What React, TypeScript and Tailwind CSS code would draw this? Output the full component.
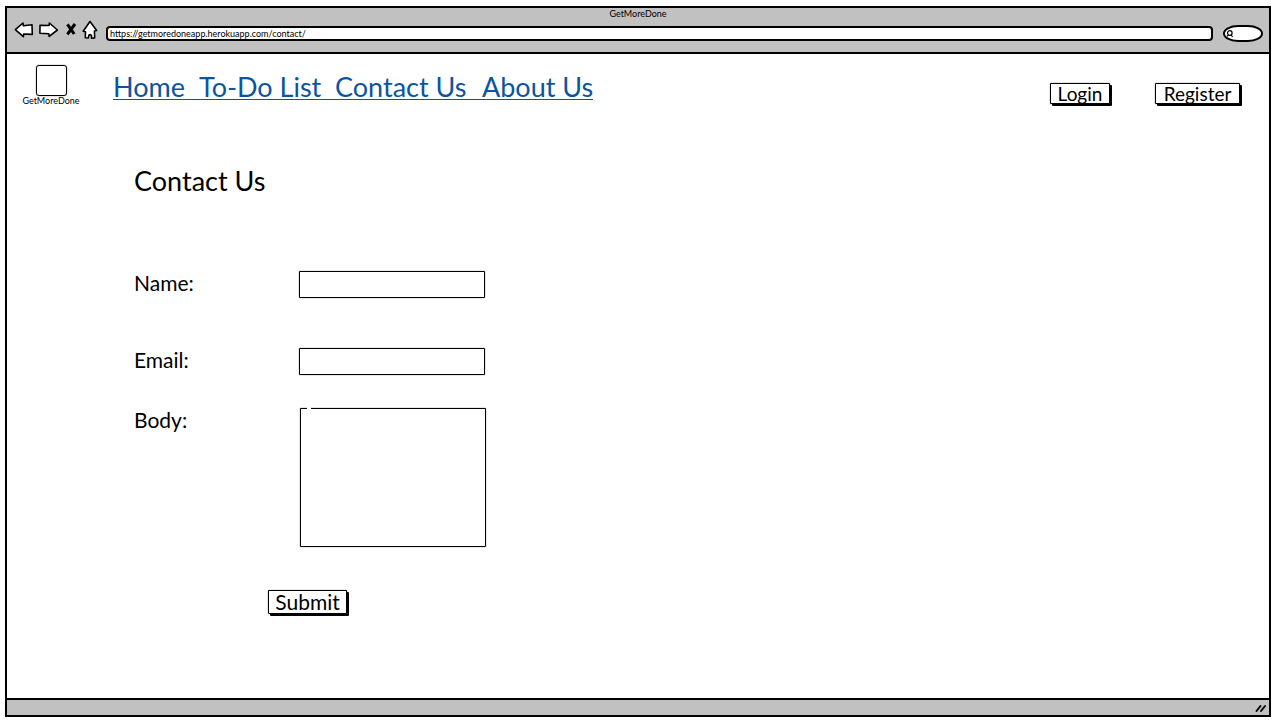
import type { ReactNode } from "react";

const links = [
  { label: "Home", href: "#home", width: "w-[86px]" },
  { label: "To-Do List", href: "#todo", width: "w-[136px]" },
  { label: "Contact Us", href: "#contact", width: "w-[147px]" },
  { label: "About Us", href: "#about", width: "" },
];

const field =
  "block w-full rounded-[1px] border border-black bg-white px-2 text-base leading-[24px] shadow-[0_0_1px_#000] outline-none";

function SketchButton({ children, type = "button", className }: { children: ReactNode; type?: "button" | "submit"; className: string }) {
  return (
    <button
      type={type}
      className={`flex items-center justify-center rounded-[1px] border border-black bg-white shadow-[0_0_1px_#000,2px_2px_0_#000] ${className}`}
    >
      {children}
    </button>
  );
}

function BrowserBar() {
  return (
    <header className="flex h-[46px] flex-col border-b-2 border-black bg-[#c1c1c1]">
      <div className="h-[14px] text-center text-[9px] leading-[12px]">GetMoreDone</div>
      <div className="flex items-center pr-[6px] pl-[7px]">
        <svg viewBox="0 3 86 22" className="h-[22px] w-[86px] shrink-0 overflow-visible fill-white stroke-black" strokeWidth="1.6" strokeLinejoin="round" aria-hidden="true">
          <path d="M1.3 10.7 9 4l.4 2.8 8.6-1 .3 9.6-8.6-.4-.3 2.7Z" />
          <path d="M26 6.2 35 6.5 35.4 4l8 7-8.2 6.4-.4-2.7-8.9-.4Z" />
          <path d="M53.4 5.4 60.2 15M61 5 53.4 15.3" strokeWidth="3" />
          <path d="M76 2.5 82.7 11.5 80.4 12.1 80.7 18.9 77.6 19.3 77.4 16.2 76 15.6 74.8 16.2 74.4 19 71.3 18.8 71.5 12.7 69.2 12.2Z" />
        </svg>
        <input
          type="text"
          aria-label="Address"
          defaultValue="https://getmoredoneapp.herokuapp.com/contact/"
          className="ml-[7px] h-[13px] min-w-0 flex-1 rounded-[3px] border border-black bg-white px-[2px] text-[9px] leading-[11px] shadow-[0_0_0_1px_#000] outline-none"
        />
        <div className="relative ml-[11px] h-[17px] w-[40px] shrink-0">
          <input
            type="text"
            aria-label="Search"
            className="block h-full w-full rounded-[16px/9px] border-2 border-black bg-white pr-1 pl-3 text-[9px] leading-[12px] outline-none"
          />
          <svg viewBox="0 0 8 8" className="absolute top-[5px] left-[3px] h-[8px] w-[8px] fill-none stroke-black" strokeWidth="1.2" aria-hidden="true">
            <circle cx="3.8" cy="3" r="2.3" />
            <path d="M2.4 4.8 1 6.4M5.2 5 6.6 7" />
          </svg>
        </div>
      </div>
    </header>
  );
}

export default function App() {
  return (
    <div className="flex min-h-screen flex-col bg-white px-[5px] pt-[6px] pb-[3px] font-['Lato','Noto_Sans',sans-serif] text-black">
      <div className="flex flex-1 flex-col border-2 border-black">
        <BrowserBar />

        <div className="flex h-[56px] justify-between pr-[29px]">
          <div className="flex">
            <div className="flex w-[88px] flex-col items-center pt-[11px]">
              <div className="h-[31px] w-[31px] rounded-[3px] border border-black shadow-[0_0_1px_#000]" />
              <span className="text-[9px] leading-[10px]">GetMoreDone</span>
            </div>
            <nav className="ml-[18px] flex pt-[18px] text-[27px] leading-[30px] text-[#0b559f]" aria-label="Main">
              {links.map((link) => (
                <a
                  key={link.href}
                  href={link.href}
                  className={`${link.width} h-[28px] border-b border-[#0b559f] whitespace-nowrap`}
                >
                  {link.label}
                </a>
              ))}
            </nav>
          </div>
          <div className="flex gap-[45px] pt-[29px] text-[19px] leading-[20px]">
            <SketchButton className="h-[21px] w-[60px]">Login</SketchButton>
            <SketchButton className="h-[21px] w-[85px]">Register</SketchButton>
          </div>
        </div>

        <main className="mt-[55px] flex-1 pl-[127px] text-[21px] leading-[24px]">
          <h1 className="text-[27px] leading-[32px]">Contact Us</h1>
          <form className="mt-[74px]" onSubmit={(event) => event.preventDefault()}>
            <div className="grid grid-cols-[165px_186px] gap-y-[50px]">
              <label htmlFor="name">Name:</label>
              <input id="name" type="text" className={`${field} h-[27px]`} />
              <label htmlFor="email">Email:</label>
              <input id="email" type="email" className={`${field} h-[27px]`} />
            </div>
            <div className="mt-[33px] grid grid-cols-[166px_186px]">
              <label htmlFor="body">Body:</label>
              <div className="relative">
                <textarea id="body" className={`${field} h-[139px] resize-none`} />
                <span className="absolute -top-px left-[7px] h-[3px] w-[4px] bg-white" />
              </div>
            </div>
            <SketchButton type="submit" className="mt-[43px] ml-[134px] h-[24px] w-[79px]">
              Submit
            </SketchButton>
          </form>
        </main>

        <footer className="flex h-[17px] items-center justify-end border-t-2 border-black bg-[#c1c1c1] pr-[2px]">
          <svg viewBox="0 0 12 10" className="h-[10px] w-[12px] stroke-black" strokeWidth="2" strokeLinecap="round" aria-hidden="true">
            <path d="M1.5 8 5.5 3M6 8 10 3" />
          </svg>
        </footer>
      </div>
    </div>
  );
}
